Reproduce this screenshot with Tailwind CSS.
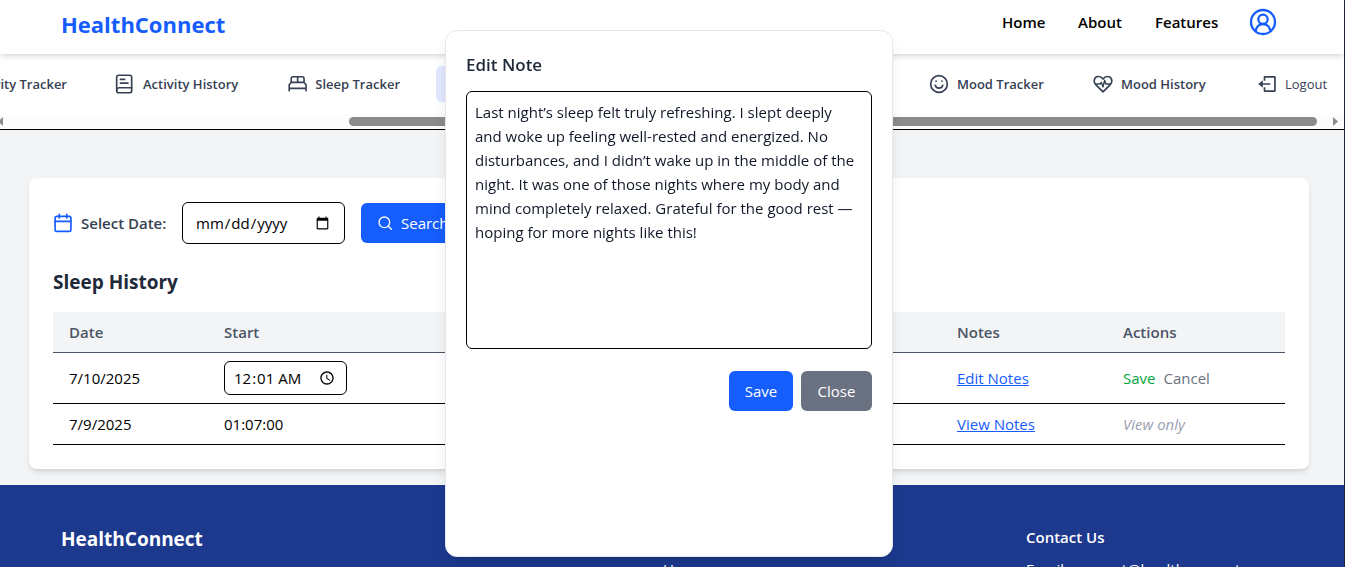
<!DOCTYPE html>
<html lang="en">
<head>
<meta charset="utf-8">
<meta name="viewport" content="width=device-width, initial-scale=1">
<title>HealthConnect</title>
<script src="https://cdn.jsdelivr.net/npm/@tailwindcss/browser@4"></script>
</head>
<body class="h-screen overflow-hidden bg-gray-100 font-['Open_Sans','Noto_Sans',sans-serif] text-[15px] leading-6 text-black">
<div class="relative flex min-h-full flex-col border-r border-gray-800">

  <header class="relative z-10 flex h-[54px] items-start justify-between bg-white pr-[67px] pl-[61px] shadow-md">
    <a href="#" class="pt-2 text-[22px] leading-8 font-bold text-blue-600">HealthConnect</a>
    <nav class="flex items-center gap-8 pt-2 font-semibold">
      <a href="#" class="w-11">Home</a>
      <a href="#" class="w-[45px]">About</a>
      <a href="#" class="w-[62px]">Features</a>
      <button type="button" aria-label="Profile" class="text-blue-600">
        <svg class="size-7" viewBox="0 0 28 28" fill="none" stroke="currentColor" stroke-width="2.300"><circle cx="14" cy="14" r="12"/><circle cx="14" cy="11.300" r="4.700"/><path d="M6.600 23.200c.6-4.200 3.400-7.200 7.400-7.200s6.800 3 7.400 7.200"/></svg>
      </button>
    </nav>
  </header>

  <div class="border-b border-black bg-white">
    <nav class="flex h-[60px] items-center justify-end gap-6 overflow-hidden pr-[3px] text-[13px] leading-5 font-semibold whitespace-nowrap text-gray-700">
      <a href="#" class="flex w-[149px] shrink-0 items-center justify-end gap-2 px-3 py-2">Activity Tracker</a>
      <a href="#" class="flex w-[149px] shrink-0 items-center gap-2 px-3 py-2">
        <svg class="size-5" viewBox="0 0 24 24" fill="none" stroke="currentColor" stroke-width="2" stroke-linecap="round" stroke-linejoin="round"><rect x="2" y="1.500" width="18" height="21" rx="2.500"/><path d="M2 19.500a3 3 0 0 1 3-3h15M6.500 6.500h5M6.500 11h9"/></svg>
        Activity History</a>
      <a href="#" class="flex w-[136px] shrink-0 items-center gap-2 px-3 py-2">
        <svg class="size-5" viewBox="0 0 24 24" fill="none" stroke="currentColor" stroke-width="2" stroke-linecap="round" stroke-linejoin="round"><path d="M1.500 20.500V13l2.500-3h16l2.500 3v7.500M1.500 17.500h21M4 10V5.500A2.500 2.500 0 0 1 6.500 3h11A2.500 2.500 0 0 1 20 5.500V10M12 3v7"/></svg>
        Sleep Tracker</a>
      <a href="#" aria-current="page" aria-label="Sleep History" class="flex h-9 w-[457px] shrink-0 items-center rounded-md bg-indigo-100 px-3"></a>
      <a href="#" class="flex w-[140px] shrink-0 items-center gap-2 px-3 py-2">
        <svg class="size-5" viewBox="0 0 24 24" fill="none" stroke="currentColor" stroke-width="2" stroke-linecap="round"><circle cx="12" cy="12" r="10"/><path d="M7.500 13.500c.7 2.400 2.300 3.500 4.500 3.500s3.800-1.100 4.500-3.500M8.500 8.500v.1M15.500 8.500v.1"/></svg>
        Mood Tracker</a>
      <a href="#" class="flex w-[140px] shrink-0 items-center gap-2 px-3 py-2">
        <svg class="size-5" viewBox="0 0 24 24" fill="none" stroke="currentColor" stroke-width="2" stroke-linecap="round" stroke-linejoin="round"><path d="M12 21.500 3.500 13C-.5 8.500 2 3 6.500 3c2.500 0 4.200 1 5.500 3 1.300-2 3-3 5.500-3C22 3 24.500 8.500 20.500 13z"/><path stroke-width="1.700" d="M3 12h5.500l1.500-2 2 5.500 2-8 1.500 4.500H21"/></svg>
        Mood History</a>
      <button type="button" class="flex w-24 shrink-0 items-center gap-2 px-3 py-2 font-normal">
        <svg class="size-5" viewBox="0 0 24 24" fill="none" stroke="currentColor" stroke-width="2" stroke-linejoin="round"><path d="M9 8V3.500h12.500v17H9V16M5 12h11"/><path d="M7 7.500v9L1.500 12z" fill="currentColor" stroke="none"/></svg>
        Logout</button>
    </nav>
    <div class="flex h-[15px] items-center justify-between bg-[#fcfcfc] pr-1.5" aria-hidden="true">
      <svg class="h-[9px] w-[3px]" viewBox="0 0 3 9" fill="#8b8b8b"><path d="M3 0v9L-2 4.500z"/></svg>
      <div class="mr-4 ml-[346px] h-[9px] grow rounded-full bg-[#8b8b8b]"></div>
      <svg class="h-[9px] w-[5px]" viewBox="0 0 5 9" fill="#8b8b8b"><path d="M0 0v9l5-4.500z"/></svg>
    </div>
  </div>

  <main class="pt-12 pr-1.5 pb-4">
    <section class="mx-auto max-w-7xl rounded-lg bg-white p-6 shadow-md">
      <form class="flex items-center">
        <svg class="mr-2 size-5 text-blue-600" viewBox="0 0 24 24" fill="none" stroke="currentColor" stroke-width="2" stroke-linecap="round" stroke-linejoin="round"><rect x="2.500" y="4" width="19" height="18" rx="2"/><path d="M7.500 1.500V6M16.500 1.500V6M2.500 10h19"/></svg>
        <label for="day" class="w-[101px] font-semibold whitespace-nowrap text-gray-700">Select Date:</label>
        <input id="day" type="date" class="h-[42px] w-[163px] rounded-md border border-black px-3">
        <button type="button" class="ml-4 flex h-10 items-center gap-2 rounded-md bg-blue-600 px-4 text-white">
          <svg class="size-4" viewBox="0 0 24 24" fill="none" stroke="currentColor" stroke-width="2" stroke-linecap="round"><circle cx="11" cy="11" r="8"/><path d="m17 17 4.500 4.500"/></svg>
          Search</button>
      </form>
      <h2 class="mt-6 mb-4 text-[19px] leading-7 font-bold text-gray-800">Sleep History</h2>
      <table class="w-full table-fixed border-collapse text-left">
        <colgroup><col class="w-[155px]"><col class="w-[180px]"><col><col class="w-[166px]"><col class="w-[178px]"></colgroup>
        <thead>
          <tr class="border-b border-gray-600 bg-gray-100 text-gray-600">
            <th class="px-4 py-2 font-semibold">Date</th><th class="px-4 py-2 font-semibold">Start</th><th></th><th class="px-4 py-2 font-semibold">Notes</th><th class="px-4 py-2 font-semibold">Actions</th>
          </tr>
        </thead>
        <tbody>
          <tr class="border-b border-black">
            <td class="px-4 py-2">7/10/2025</td>
            <td class="px-4 py-2"><input type="time" value="00:01" aria-label="Start" class="block h-[34px] w-[123px] rounded-md border border-black px-2"></td>
            <td></td>
            <td class="px-4 py-2"><button type="button" class="text-blue-600 underline">Edit Notes</button></td>
            <td class="px-4 py-2"><div class="flex gap-2"><button type="button" class="text-green-600">Save</button><button type="button" class="text-gray-500">Cancel</button></div></td>
          </tr>
          <tr class="border-b border-black">
            <td class="px-4 py-2">7/9/2025</td>
            <td class="px-4 py-2">01:07:00</td>
            <td></td>
            <td class="px-4 py-2"><button type="button" class="text-blue-600 underline">View Notes</button></td>
            <td class="px-4 py-2 text-gray-400 italic">View only</td>
          </tr>
        </tbody>
      </table>
    </section>
  </main>

  <footer class="grid grow grid-cols-[602px_363px_1fr] bg-blue-900 py-10 pl-[61px] text-white">
    <h2 class="text-[19px] leading-7 font-bold">HealthConnect</h2>
    <div class="pt-8"><a href="#">Home</a></div>
    <div>
      <h3 class="mb-2 font-semibold">Contact Us</h3>
      <p>Email: support@healthconnect.com</p>
    </div>
  </footer>
</div>

<div class="pointer-events-none fixed inset-0 z-20 flex justify-center pt-[30px] pr-[7px] pb-2.5">
  <div role="dialog" aria-labelledby="note-title" class="pointer-events-auto w-full max-w-md rounded-xl border border-gray-200 bg-white p-5 shadow-lg">
    <h2 id="note-title" class="mb-3 text-[17px] leading-7 font-semibold text-gray-800">Edit Note</h2>
    <textarea aria-labelledby="note-title" class="block h-[258px] w-full resize-none rounded-md border border-black py-2 pr-3.5 pl-2 text-gray-900">Last night’s sleep felt truly refreshing. I slept deeply and woke up feeling well-rested and energized. No disturbances, and I didn’t wake up in the middle of the night. It was one of those nights where my body and mind completely relaxed. Grateful for the good rest — hoping for more nights like this!</textarea>
    <div class="mt-[22px] flex justify-end gap-2 text-white">
      <button type="button" class="h-10 w-16 rounded-md bg-blue-600">Save</button>
      <button type="button" class="h-10 w-[71px] rounded-md bg-gray-500">Close</button>
    </div>
  </div>
</div>
</body>
</html>
